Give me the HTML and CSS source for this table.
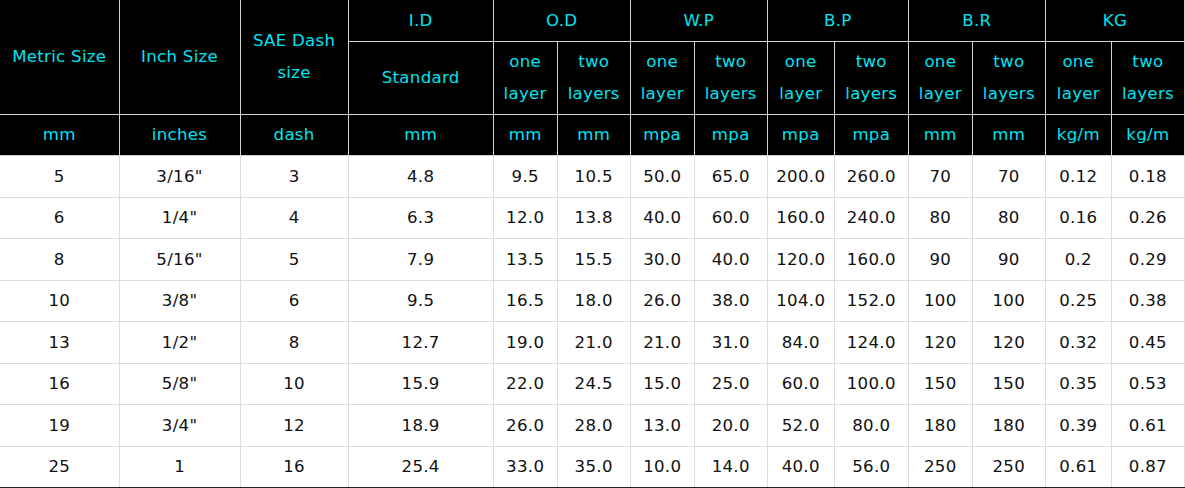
FILE: index.html
```html
<!DOCTYPE html>
<html lang="en">
<head>
<meta charset="utf-8">
<title>Hose specifications</title>
<link rel="stylesheet" href="styles.css">
</head>
<body>
<table class="spec">
  <colgroup>
    <col class="c119"><col class="c121"><col class="c108"><col class="c145">
    <col class="c64"><col class="c73"><col class="c64"><col class="c73">
    <col class="c67"><col class="c74"><col class="c64"><col class="c73">
    <col class="c66"><col class="c73">
  </colgroup>
  <thead>
    <tr class="h1">
      <th rowspan="2">Metric Size</th>
      <th rowspan="2">Inch Size</th>
      <th rowspan="2" class="two">SAE Dash<br>size</th>
      <th>I.D</th>
      <th colspan="2">O.D</th>
      <th colspan="2">W.P</th>
      <th colspan="2">B.P</th>
      <th colspan="2">B.R</th>
      <th colspan="2">KG</th>
    </tr>
    <tr class="h2">
      <th>Standard</th>
      <th class="two">one<br>layer</th><th class="two">two<br>layers</th>
      <th class="two">one<br>layer</th><th class="two">two<br>layers</th>
      <th class="two">one<br>layer</th><th class="two">two<br>layers</th>
      <th class="two">one<br>layer</th><th class="two">two<br>layers</th>
      <th class="two">one<br>layer</th><th class="two">two<br>layers</th>
    </tr>
    <tr class="h3">
      <th>mm</th><th>inches</th><th>dash</th><th>mm</th>
      <th>mm</th><th>mm</th><th>mpa</th><th>mpa</th><th>mpa</th><th>mpa</th>
      <th>mm</th><th>mm</th><th>kg/m</th><th>kg/m</th>
    </tr>
  </thead>
  <tbody>
    <tr><td>5</td><td>3/16"</td><td>3</td><td>4.8</td><td>9.5</td><td>10.5</td><td>50.0</td><td>65.0</td><td>200.0</td><td>260.0</td><td>70</td><td>70</td><td>0.12</td><td>0.18</td></tr>
    <tr><td>6</td><td>1/4"</td><td>4</td><td>6.3</td><td>12.0</td><td>13.8</td><td>40.0</td><td>60.0</td><td>160.0</td><td>240.0</td><td>80</td><td>80</td><td>0.16</td><td>0.26</td></tr>
    <tr><td>8</td><td>5/16"</td><td>5</td><td>7.9</td><td>13.5</td><td>15.5</td><td>30.0</td><td>40.0</td><td>120.0</td><td>160.0</td><td>90</td><td>90</td><td>0.2</td><td>0.29</td></tr>
    <tr><td>10</td><td>3/8"</td><td>6</td><td>9.5</td><td>16.5</td><td>18.0</td><td>26.0</td><td>38.0</td><td>104.0</td><td>152.0</td><td>100</td><td>100</td><td>0.25</td><td>0.38</td></tr>
    <tr><td>13</td><td>1/2"</td><td>8</td><td>12.7</td><td>19.0</td><td>21.0</td><td>21.0</td><td>31.0</td><td>84.0</td><td>124.0</td><td>120</td><td>120</td><td>0.32</td><td>0.45</td></tr>
    <tr><td>16</td><td>5/8"</td><td>10</td><td>15.9</td><td>22.0</td><td>24.5</td><td>15.0</td><td>25.0</td><td>60.0</td><td>100.0</td><td>150</td><td>150</td><td>0.35</td><td>0.53</td></tr>
    <tr><td>19</td><td>3/4"</td><td>12</td><td>18.9</td><td>26.0</td><td>28.0</td><td>13.0</td><td>20.0</td><td>52.0</td><td>80.0</td><td>180</td><td>180</td><td>0.39</td><td>0.61</td></tr>
    <tr><td>25</td><td>1</td><td>16</td><td>25.4</td><td>33.0</td><td>35.0</td><td>10.0</td><td>14.0</td><td>40.0</td><td>56.0</td><td>250</td><td>250</td><td>0.61</td><td>0.87</td></tr>
  </tbody>
</table>
</body>
</html>
```
FILE: styles.css
```css
html, body {
  margin: 0;
  padding: 0;
  background: #fff;
}
.spec {
  border-collapse: collapse;
  table-layout: fixed;
  width: 1185px;
  font-family: "DejaVu Sans", sans-serif;
  font-size: 16.6px;
  letter-spacing: 0.3px;
}
.c119 { width: 119px; }
.c121 { width: 121px; }
.c108 { width: 108px; }
.c145 { width: 145px; }
.c64 { width: 64px; }
.c73 { width: 73px; }
.c67 { width: 67px; }
.c74 { width: 74px; }
.c66 { width: 66px; }
.spec th {
  background: #000;
  color: #00e3f0;
  font-weight: normal;
  padding: 0;
  text-align: center;
  vertical-align: middle;
  border: 1px solid #d4d4d4;
  line-height: 32px;
}
.spec thead tr:first-child th { border-top: none; }
.spec tr th:first-child, .spec tr td:first-child { border-left: none; }
.h1 th { height: 41px; }
.h2 th { height: 72px; }
.h3 th { height: 40px; }
.spec td {
  padding: 0;
  height: 40.5px;
  text-align: center;
  vertical-align: middle;
  color: #111;
  border: 1px solid #dcdcdc;
}
.spec tbody tr:last-child td { border-bottom: 2px solid #222; }
```
